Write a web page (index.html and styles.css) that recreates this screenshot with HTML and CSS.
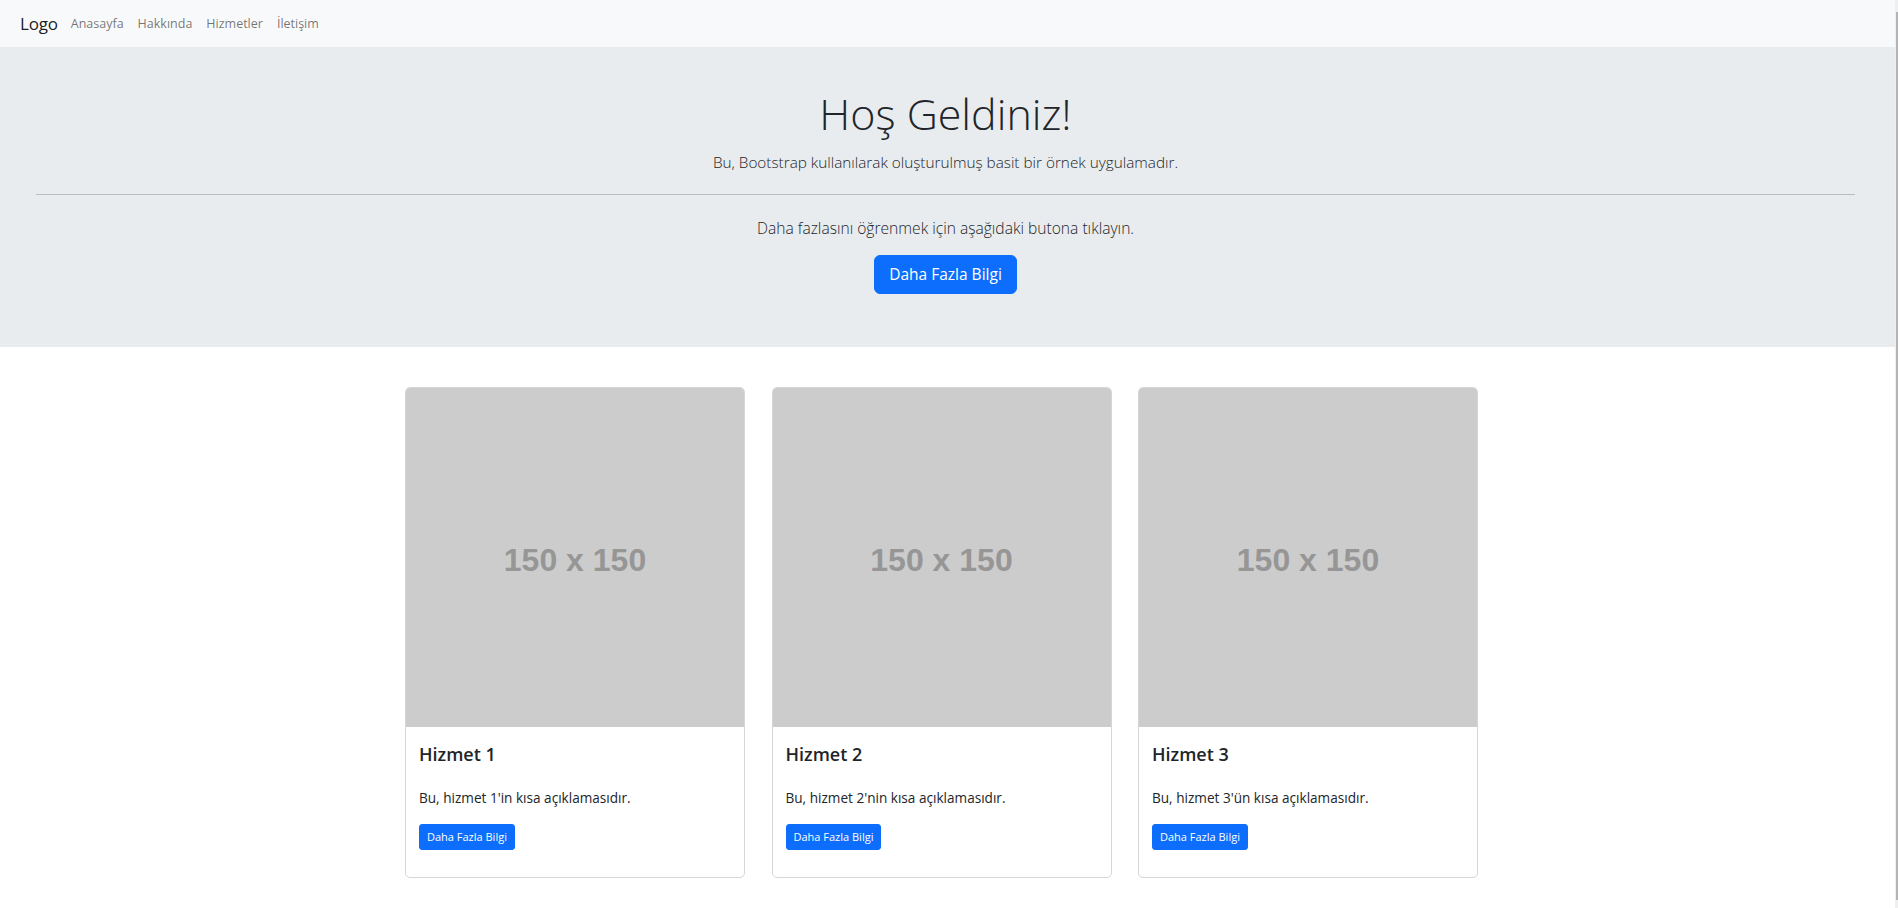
FILE: index.html
```html
<!DOCTYPE html>
<html lang="tr">
<head>
<meta charset="utf-8">
<title>Hoş Geldiniz</title>
<link rel="stylesheet" href="styles.css">
</head>
<body>
<div class="page">
  <nav class="navbar">
    <a class="brand" href="#">Logo</a>
    <ul class="nav">
      <li><a href="#">Anasayfa</a></li>
      <li><a href="#">Hakkında</a></li>
      <li><a href="#">Hizmetler</a></li>
      <li><a href="#">İletişim</a></li>
    </ul>
  </nav>

  <header class="hero">
    <h1 class="hero-title">Hoş Geldiniz!</h1>
    <p class="hero-lead">Bu, Bootstrap kullanılarak oluşturulmuş basit bir örnek uygulamadır.</p>
    <hr class="hero-rule">
    <p class="hero-text">Daha fazlasını öğrenmek için aşağıdaki butona tıklayın.</p>
    <a class="btn btn-lg" href="#">Daha Fazla Bilgi</a>
  </header>

  <section class="services">
    <div class="card-grid">
      <div class="card">
        <div class="placeholder">150 x 150</div>
        <div class="card-body">
          <h5 class="card-title">Hizmet 1</h5>
          <p class="card-text">Bu, hizmet 1'in kısa açıklamasıdır.</p>
          <a class="btn btn-sm" href="#">Daha Fazla Bilgi</a>
        </div>
      </div>
      <div class="card">
        <div class="placeholder">150 x 150</div>
        <div class="card-body">
          <h5 class="card-title">Hizmet 2</h5>
          <p class="card-text">Bu, hizmet 2'nin kısa açıklamasıdır.</p>
          <a class="btn btn-sm" href="#">Daha Fazla Bilgi</a>
        </div>
      </div>
      <div class="card">
        <div class="placeholder">150 x 150</div>
        <div class="card-body">
          <h5 class="card-title">Hizmet 3</h5>
          <p class="card-text">Bu, hizmet 3'ün kısa açıklamasıdır.</p>
          <a class="btn btn-sm" href="#">Daha Fazla Bilgi</a>
        </div>
      </div>
    </div>
  </section>
</div>
<div class="scrollbar"><div class="scrollbar-thumb"></div></div>
</body>
</html>
```

FILE: styles.css
```css
* { box-sizing: border-box; }

html, body {
  margin: 0;
  padding: 0;
  background: #ffffff;
}

body {
  font-family: "Open Sans", "Noto Sans", "Liberation Sans", sans-serif;
  color: #212529;
  overflow: hidden;
}

.page {
  margin-right: 3px;
}

a { text-decoration: none; }

/* Navbar */
.navbar {
  display: flex;
  align-items: center;
  height: 47px;
  padding-left: 20px;
  background: #f8f9fa;
}

.brand {
  font-size: 17px;
  color: rgba(0, 0, 0, 0.9);
  letter-spacing: -0.2px;
}

.nav {
  display: flex;
  list-style: none;
  margin: 0 0 0 6px;
  padding: 0;
}

.nav a {
  display: block;
  padding: 0 7px;
  font-size: 12.5px;
  color: rgba(0, 0, 0, 0.55);
}

/* Hero */
.hero {
  display: flex;
  flex-direction: column;
  align-items: center;
  background: #e9ecef;
  padding: 41px 40px 53px 36px;
}

.hero-title {
  margin: 0;
  font-size: 43px;
  font-weight: 300;
  line-height: 52px;
}

.hero-lead {
  margin: 10px 0 0;
  font-size: 15.3px;
  font-weight: 300;
  line-height: 24px;
}

.hero-rule {
  align-self: stretch;
  margin: 20px 0 0;
  border: 0;
  border-top: 1px solid #b9bcc0;
}

.hero-text {
  margin: 21px 0 0;
  font-size: 15.6px;
  font-weight: 300;
  line-height: 24px;
}

.btn {
  display: inline-block;
  color: #ffffff;
  background: #0d6efd;
  border: 1px solid #0d6efd;
}

.btn-lg {
  margin-top: 15px;
  width: 143px;
  height: 39px;
  line-height: 37px;
  text-align: center;
  font-size: 15.5px;
  border-radius: 6px;
}

/* Services */
.services {
  padding: 40px 12px 40px 0;
}

.card-grid {
  display: grid;
  grid-template-columns: repeat(3, 340px);
  column-gap: 26.5px;
  justify-content: center;
}

.card {
  display: flex;
  flex-direction: column;
  border: 1px solid #d6d6d6;
  border-radius: 5px;
  overflow: hidden;
  background: #ffffff;
}

.placeholder {
  height: 339px;
  display: flex;
  align-items: center;
  justify-content: center;
  background: #cccccc;
  color: #969696;
  font-family: "Liberation Sans", Arial, sans-serif;
  font-size: 32px;
  font-weight: 700;
  padding-top: 5px;
}

.card-body {
  padding: 14.5px 13px 27px;
}

.card-title {
  margin: 0;
  font-size: 18px;
  font-weight: 600;
  line-height: 24px;
}

.card-text {
  margin: 22.5px 0 17px;
  font-size: 13.6px;
  line-height: 19px;
}

.btn-sm {
  padding: 0 7px;
  height: 26px;
  line-height: 24px;
  font-size: 11px;
  border-radius: 3px;
}

/* Fake scrollbar */
.scrollbar {
  position: fixed;
  top: 0;
  right: 0;
  width: 3px;
  height: 100%;
  background: #efefef;
  display: flex;
  justify-content: flex-end;
  padding: 12px 0 8px;
}

.scrollbar-thumb {
  width: 2px;
  height: 100%;
  background: #b4b4b4;
}
```
